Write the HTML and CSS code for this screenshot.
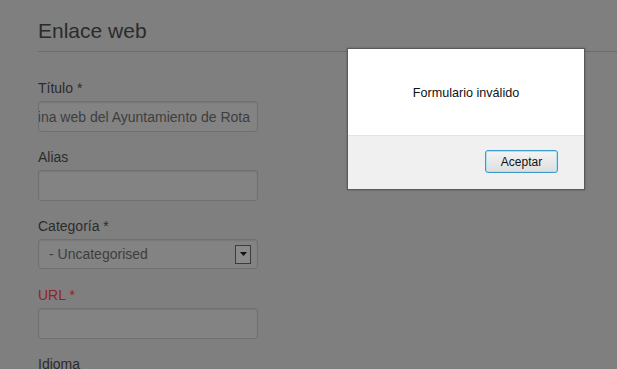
FILE: index.html
```html
<!DOCTYPE html>
<html lang="es">
<head>
<meta charset="utf-8">
<title>Enlace web</title>
<link rel="stylesheet" href="styles.css">
</head>
<body>
<div class="page">
  <h1 class="title">Enlace web</h1>
  <div class="form">
    <div class="field">
      <label class="label">Título *</label>
      <div class="input scrolled"><span>Página web del Ayuntamiento de Rota</span></div>
    </div>
    <div class="field">
      <label class="label">Alias</label>
      <div class="input"></div>
    </div>
    <div class="field">
      <label class="label">Categoría *</label>
      <div class="input select"><span>- Uncategorised</span><span class="arrow"><svg width="7" height="4" viewBox="0 0 7 4"><path d="M0 0h7L3.5 4z" fill="#111"/></svg></span></div>
    </div>
    <div class="field">
      <label class="label invalid">URL *</label>
      <div class="input"></div>
    </div>
    <div class="field">
      <label class="label">Idioma</label>
    </div>
  </div>
</div>
<div class="dialog">
  <div class="dialog-body">Formulario inválido</div>
  <div class="dialog-foot"><button class="btn">Aceptar</button></div>
</div>
</body>
</html>
```
FILE: styles.css
```css
html, body { margin: 0; padding: 0; }
body {
  background: #7f7f7f;
  font-family: "Liberation Sans", Arial, sans-serif;
  color: #2a2a2a;
  width: 617px;
  height: 369px;
  overflow: hidden;
  position: relative;
}
.page { padding: 18px 0 0 38px; }
.title {
  margin: 0;
  font-weight: normal;
  font-size: 21px;
  line-height: 26px;
  color: #2b2b2b;
  padding-bottom: 7px;
  border-bottom: 1px solid #6c6c6c;
}
.form { padding-top: 27px; display: flex; flex-direction: column; gap: 16px; }
.field { display: flex; flex-direction: column; gap: 4px; }
.label { font-size: 14px; line-height: 18px; color: #2c2c2c; }
.label.invalid { color: #8e2424; }
.input {
  box-sizing: border-box;
  width: 220px;
  height: 31px;
  background: #838383;
  border: 1px solid #6f6f6f;
  border-radius: 3px;
  box-shadow: inset 0 1px 1px rgba(0,0,0,0.08);
  font-size: 14px;
  color: #3e3e3e;
  display: flex;
  align-items: center;
  padding: 0 7px 0 6px;
  white-space: nowrap;
  overflow: hidden;
}
.input.scrolled { justify-content: flex-end; }
.input.select { justify-content: space-between; padding: 0 6px 0 10px; height: 30px; margin-bottom: 1px; }
.arrow {
  box-sizing: border-box;
  width: 16px;
  height: 19px;
  border: 1px solid #3c3c3c;
  background: #8a8a8a;
  display: flex;
  align-items: center;
  justify-content: center;
}
.dialog {
  position: absolute;
  left: 347px;
  top: 48px;
  width: 238px;
  height: 142px;
  box-sizing: border-box;
  border: 1px solid #5a5a5a;
  background: #fff;
  display: flex;
  flex-direction: column;
  box-shadow: 0 0 2px rgba(0,0,0,0.3);
}
.dialog-body {
  height: 86px;
  display: flex;
  align-items: center;
  justify-content: center;
  font-size: 12.6px;
  color: #111;
  padding-top: 1px;
  box-sizing: border-box;
}
.dialog-foot {
  flex: 1;
  background: #f0f0f0;
  border-top: 1px solid #e3e3e3;
  display: flex;
  justify-content: flex-end;
  align-items: flex-start;
  padding: 14px 26px 0 0;
}
.btn {
  width: 73px;
  height: 23px;
  font-family: "Liberation Sans", Arial, sans-serif;
  font-size: 12px;
  color: #111;
  border: 1px solid #3d9ccc;
  border-radius: 3px;
  background: linear-gradient(#f4f4f4, #dedede);
  box-shadow: inset 0 0 0 1px #aee0f5;
  padding: 0;
}
```
